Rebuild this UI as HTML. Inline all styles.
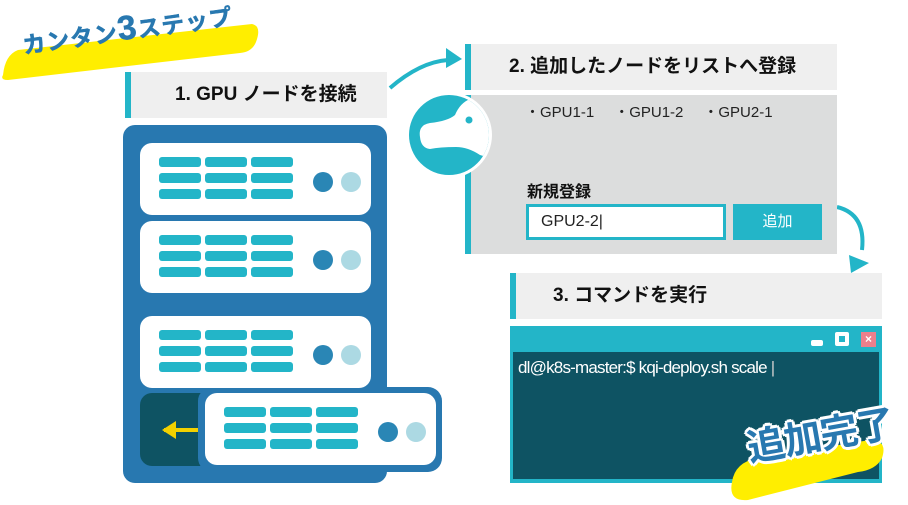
<!DOCTYPE html>
<html><head><meta charset="utf-8"><style>
*{margin:0;padding:0;box-sizing:border-box}
body{width:908px;height:505px;background:#fff;position:relative;overflow:hidden;font-family:"Liberation Sans","Noto Sans CJK JP",sans-serif}
.a{position:absolute}
.hd{position:absolute;background:#efefef;border-left:6px solid #23b5c8;font-size:19px;font-weight:bold;color:#111;line-height:46px;height:46px}
.unit{position:absolute;background:#fff;border-radius:12px;width:231px;height:72px}
.bar{position:absolute;width:42px;height:10px;border-radius:3px;background:#23b5c8}
.c1,.c2{position:absolute;width:20px;height:20px;border-radius:50%}
.c1{background:#2a86b5}.c2{background:#acd9e3}
</style></head><body>

<svg class="a" style="left:0;top:0" width="908" height="505">
<path d="M3 75 Q5 55 18 50 L252 24 Q262 26 256 42 Q252 52 240 53 L8 80 Q0 80 3 75Z" fill="#ffee00"/>
<path d="M390 88 Q420 62 448 60" stroke="#23b5c8" stroke-width="4" fill="none"/>
<path d="M446 48 L462 59 L446 68Z" fill="#23b5c8"/>
<path d="M837 207 Q866 214 862 250" stroke="#23b5c8" stroke-width="4" fill="none"/>
<path d="M849 255 L869 263 L851 273Z" fill="#23b5c8"/>
</svg>

<div class="a" style="left:20px;top:26px;transform:rotate(-8deg);transform-origin:left top;color:#2878b0;font-weight:bold;font-size:23px;white-space:nowrap;letter-spacing:1px;line-height:34px;-webkit-text-stroke:0.5px #2878b0">カンタン<span style="font-size:34px">3</span>ステップ</div>

<div class="hd" style="left:125px;top:72px;width:262px;padding-left:44px">1. GPU ノードを接続</div>

<div class="a" style="left:123px;top:125px;width:264px;height:358px;background:#2878b0;border-radius:12px"></div>
<div class="a" style="left:140px;top:393px;width:120px;height:73px;background:#0e5363;border-radius:12px"></div>
<svg class="a" style="left:160px;top:418px" width="44" height="24"><path d="M4 12 L40 12" stroke="#f3d100" stroke-width="4"/><path d="M2 12 L16 3 L16 21Z" fill="#f3d100"/></svg>
<div class="a" style="left:198px;top:387px;width:244px;height:85px;background:#2878b0;border-radius:14px"></div>

<script>
var ys=[143,221,316,393],xs=[140,140,140,205];
var h='';
for(var i=0;i<4;i++){var x=xs[i],y=ys[i];
h+='<div class="unit" style="left:'+x+'px;top:'+y+'px">';
for(var r=0;r<3;r++)for(var c=0;c<3;c++)h+='<div class="bar" style="left:'+(19+c*46)+'px;top:'+(14+r*16)+'px"></div>';
h+='<div class="c1" style="left:173px;top:29px"></div><div class="c2" style="left:201px;top:29px"></div></div>';}
document.write(h);
</script>

<div class="hd" style="left:465px;top:44px;width:372px;padding-left:38px">2. 追加したノードをリストへ登録</div>
<div class="a" style="left:465px;top:95px;width:372px;height:159px;background:#dcdddd;border-left:6px solid #23b5c8"></div>
<div class="a" style="left:525px;top:101px;font-size:15px;color:#222;white-space:nowrap">・GPU1-1<span style="margin-left:20px">・GPU1-2</span><span style="margin-left:20px">・GPU2-1</span></div>
<div class="a" style="left:527px;top:178px;font-size:16px;font-weight:bold;color:#111">新規登録</div>
<div class="a" style="left:526px;top:204px;width:200px;height:36px;background:#fff;border:3px solid #23b5c8;font-size:16px;line-height:30px;padding-left:12px;color:#222">GPU2-2<span style="font-weight:100">|</span></div>
<div class="a" style="left:733px;top:204px;width:89px;height:36px;background:#23b5c8;color:#fff;font-size:15px;line-height:36px;text-align:center">追加</div>

<svg class="a" style="left:400px;top:85px" width="100" height="100">
<circle cx="49" cy="50" r="43" fill="#fff"/>
<clipPath id="cp"><circle cx="49" cy="50" r="40"/></clipPath>
<circle cx="49" cy="50" r="40" fill="#23b5c8"/>
<g clip-path="url(#cp)"><path d="M20 52 Q18 40 30 38 Q48 36 55 30 Q60 18 70 14 Q80 12 100 14 L100 78 Q88 72 80 70 Q68 62 56 62 Q40 62 30 64 Q21 63 20 52Z" fill="#fff"/></g>
<circle cx="69" cy="35" r="3.5" fill="#23b5c8"/>
</svg>

<div class="hd" style="left:510px;top:273px;width:372px;padding-left:37px">3. コマンドを実行</div>
<div class="a" style="left:510px;top:326px;width:372px;height:157px;background:#23b5c8"></div>
<div class="a" style="left:513px;top:352px;width:366px;height:127px;background:#0e5363"></div>
<div class="a" style="left:811px;top:340px;width:12px;height:6px;background:#fff;border-radius:2px"></div>
<div class="a" style="left:835px;top:332px;width:14px;height:14px;border:4px solid #fff;border-radius:2px"></div>
<div class="a" style="left:861px;top:332px;width:15px;height:15px;background:#ec7f8c;color:#fff;font-size:12px;line-height:15px;text-align:center;font-weight:bold">×</div>
<div class="a" style="left:518px;top:358px;color:#fff;font-size:17px;letter-spacing:-0.8px;white-space:nowrap">dl@k8s-master:$ kqi-deploy.sh scale <span style="font-weight:100;color:#ccc">|</span></div>

<svg class="a" style="left:0;top:0" width="908" height="505">
<path d="M732 482 Q735 462 758 458 L870 440 Q888 440 882 458 Q876 470 858 472 L748 500 Q728 502 732 482Z" fill="#ffee00"/>
</svg>
<div class="a" style="left:744px;top:428px;transform:rotate(-10deg);transform-origin:left top;color:#2878b0;font-size:38px;font-weight:bold;white-space:nowrap;letter-spacing:-1px;line-height:44px;text-shadow:3px 0 #fff,-3px 0 #fff,0 3px #fff,0 -3px #fff,2px 2px #fff,-2px -2px #fff,2px -2px #fff,-2px 2px #fff">追加完了</div>

</body></html>
